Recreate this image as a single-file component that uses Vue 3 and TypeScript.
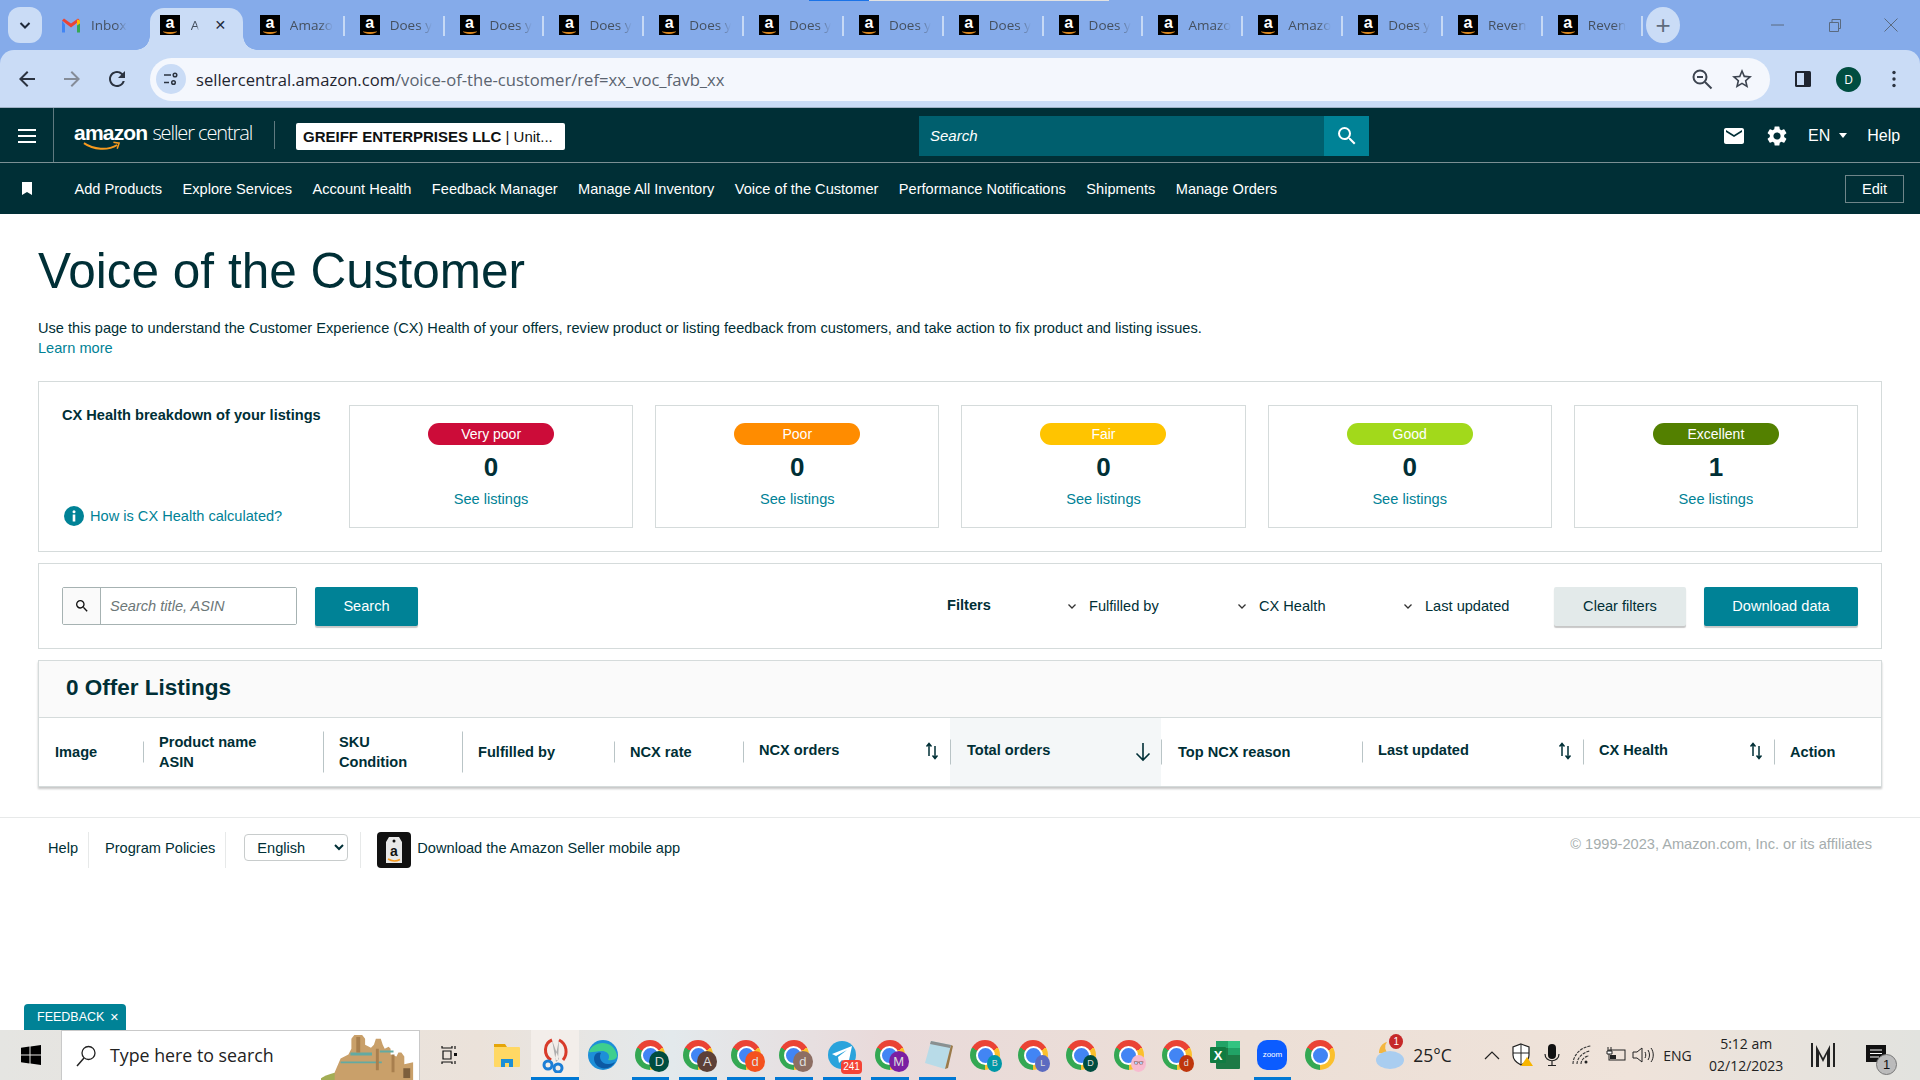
<script setup lang="ts">
interface IBrowserTab {
    title: string;
    gmail?: boolean;
    active?: boolean;
}

interface IColumn {
    lines: string[];
    sep: number;
    sort?: 'both' | 'down';
    selected?: boolean;
}

interface IApp {
    kind: string;
    badge?: string;
    color?: string;
    small?: boolean;
    open?: boolean;
    focus?: boolean;
}

const tabs: IBrowserTab[] = [
    { title: 'Inbox', gmail: true },
    { title: 'A', active: true },
    { title: 'Amazo' },
    { title: 'Does y' },
    { title: 'Does y' },
    { title: 'Does y' },
    { title: 'Does y' },
    { title: 'Does y' },
    { title: 'Does y' },
    { title: 'Does y' },
    { title: 'Does y' },
    { title: 'Amazo' },
    { title: 'Amazo' },
    { title: 'Does y' },
    { title: 'Reven' },
    { title: 'Reven' },
];

const navItems = [
    'Add Products',
    'Explore Services',
    'Account Health',
    'Feedback Manager',
    'Manage All Inventory',
    'Voice of the Customer',
    'Performance Notifications',
    'Shipments',
    'Manage Orders',
];

const healthCards = [
    { label: 'Very poor', color: '#cc0c39', count: 0 },
    { label: 'Poor', color: '#ff8c00', count: 0 },
    { label: 'Fair', color: '#ffc400', count: 0 },
    { label: 'Good', color: '#a2d91b', count: 0 },
    { label: 'Excellent', color: '#538000', count: 1 },
];

const filters = ['Fulfilled by', 'CX Health', 'Last updated'];

const columns: IColumn[] = [
    { lines: ['Image'], sep: 0 },
    { lines: ['Product name', 'ASIN'], sep: 21 },
    { lines: ['SKU', 'Condition'], sep: 41 },
    { lines: ['Fulfilled by'], sep: 41 },
    { lines: ['NCX rate'], sep: 21 },
    { lines: ['NCX orders'], sep: 21, sort: 'both' },
    { lines: ['Total orders'], sep: 25, sort: 'down', selected: true },
    { lines: ['Top NCX reason'], sep: 25 },
    { lines: ['Last updated'], sep: 21, sort: 'both' },
    { lines: ['CX Health'], sep: 25, sort: 'both' },
    { lines: ['Action'], sep: 25 },
];

const apps: IApp[] = [
    { kind: 'explorer' },
    { kind: 'snip', open: true, focus: true },
    { kind: 'edge' },
    { kind: 'chrome', badge: 'D', color: '#004d40', open: true },
    { kind: 'chrome', badge: 'A', color: '#5d4037', open: true },
    { kind: 'chrome', badge: 'd', color: '#f4511e', open: true },
    { kind: 'chrome', badge: 'd', color: '#8d6e63', open: true },
    { kind: 'telegram', open: true },
    { kind: 'chrome', badge: 'M', color: '#7b1fa2', open: true },
    { kind: 'notepad', open: true },
    { kind: 'chrome', badge: 'B', color: '#0097a7', small: true },
    { kind: 'chrome', badge: 'L', color: '#5c6bc0', small: true },
    { kind: 'chrome', badge: 'D', color: '#004d40', small: true },
    { kind: 'chrome', badge: '👓', color: '#f8bbd0', small: true },
    { kind: 'chrome', badge: 'd', color: '#bf360c', small: true },
    { kind: 'excel' },
    { kind: 'zoom', open: true },
    { kind: 'chrome' },
];

const searchPath = 'M15.5 14h-.79l-.28-.27A6.47 6.47 0 0 0 16 9.5 6.5 6.5 0 1 0 9.5 16c1.61 0 3.09-.59 4.23-1.57l.27.28v.79l5 4.99L20.49 19l-4.99-5zm-6 0C7.01 14 5 11.99 5 9.5S7.01 5 9.5 5 14 7.01 14 9.5 11.99 14 9.5 14z';
</script>

<template>
    <div class="page">
        <div class="loading-line"><span></span></div>

        <div class="browser">
            <div class="tabstrip">
                <button class="tab-search">
                    <svg width="14" height="14" viewBox="0 0 14 14"><path d="M2.5 5l4.5 4.5L11.500 5" fill="none" stroke="#1f2a3a" stroke-width="2" /></svg>
                </button>
                <div class="tabs">
                    <div v-for="tab in tabs" class="tab" :class="{ active: tab.active, mail: tab.gmail }">
                        <svg v-if="tab.gmail" class="favicon" viewBox="0 0 20 16">
                            <path d="M1 3v12h3V7z" fill="#4285f4" />
                            <path d="M16 7v8h3V3z" fill="#34a853" />
                            <path d="M1 3l9 7 9-7-2-2-7 5-7-5z" fill="#ea4335" />
                            <path d="M16 2l3 1v3l-3 2z" fill="#fbbc04" />
                        </svg>
                        <span v-else class="favicon amazon-icon">a<i></i></span>
                        <span class="tab-title">{{ tab.title }}</span>
                        <span v-if="tab.active" class="tab-close">✕</span>
                    </div>
                </div>
                <button class="tab-new">+</button>
                <div class="window-controls">
                    <svg width="16" height="16" viewBox="0 0 16 16"><path d="M2 8h13" stroke="#5a6a80" /></svg>
                    <svg width="16" height="16" viewBox="0 0 16 16"><path d="M3.500 5.500h9v9h-9zM6 5.500V2.500h8.500v9h-2" fill="none" stroke="#5a6a80" /></svg>
                    <svg width="16" height="16" viewBox="0 0 16 16"><path d="M1.500 1.500l13 13M14.500 1.500l-13 13" stroke="#5a6a80" /></svg>
                </div>
            </div>

            <div class="toolbar">
                <svg class="tool" viewBox="0 0 24 24"><path d="M20 11H7.830l5.590-5.590L12 4l-8 8 8 8 1.410-1.410L7.830 13H20v-2z" fill="#2b3340" /></svg>
                <svg class="tool" viewBox="0 0 24 24"><path d="M4 11h12.170l-5.590-5.590L12 4l8 8-8 8-1.410-1.410L16.170 13H4v-2z" fill="#858c98" /></svg>
                <svg class="tool" viewBox="0 0 24 24"><path d="M17.650 6.350A7.958 7.958 0 0 0 12 4c-4.420 0-7.990 3.580-7.990 8s3.570 8 7.990 8c3.730 0 6.840-2.550 7.730-6h-2.080A5.990 5.990 0 0 1 12 18c-3.310 0-6-2.690-6-6s2.690-6 6-6c1.660 0 3.140.690 4.220 1.780L13 11h7V4l-2.350 2.350z" fill="#2b3340" /></svg>
                <div class="urlbar">
                    <span class="site-btn">
                        <svg width="16" height="16" viewBox="0 0 16 16"><path d="M1 4h7M1 11.500h5" stroke="#2b3340" stroke-width="1.600" /><circle cx="12" cy="4" r="1.800" fill="none" stroke="#2b3340" stroke-width="1.500" /><circle cx="10.500" cy="11.500" r="1.800" fill="none" stroke="#2b3340" stroke-width="1.500" /></svg>
                    </span>
                    <span class="url"><b>sellercentral.amazon.com</b>/voice-of-the-customer/ref=xx_voc_favb_xx</span>
                    <svg class="url-icon" viewBox="0 0 24 24"><circle cx="10" cy="10" r="6.500" fill="none" stroke="#3c4450" stroke-width="2" /><path d="M7 10h6" stroke="#3c4450" stroke-width="2" /><path d="M15 15l6.500 6.500" stroke="#3c4450" stroke-width="2" /></svg>
                    <svg class="url-icon" viewBox="0 0 24 24"><path d="M22 9.240l-7.190-.620L12 2 9.190 8.630 2 9.240l5.460 4.730L5.820 21 12 17.270 18.180 21l-1.630-7.030L22 9.240zM12 15.400l-3.760 2.270 1-4.280-3.320-2.880 4.380-.380L12 6.100l1.710 4.040 4.380.380-3.320 2.880 1 4.280L12 15.400z" fill="#3c4450" /></svg>
                </div>
                <svg class="panel-icon" viewBox="0 0 18 18"><rect x="1" y="1" width="16" height="16" rx="1.500" fill="#1f2530" /><rect x="3" y="3" width="7" height="12" fill="#cadcf6" /></svg>
                <span class="avatar">D</span>
                <svg class="menu-icon" viewBox="0 0 4 18"><circle cx="2" cy="2.500" r="1.700" /><circle cx="2" cy="9" r="1.700" /><circle cx="2" cy="15.500" r="1.700" /></svg>
            </div>
        </div>

        <header class="sc-header">
            <div class="burger"><span></span><span></span><span></span></div>
            <div class="logo">
                <span class="logo-amazon">amazon<svg class="logo-smile" viewBox="0 0 40 10"><path d="M1 2c10 7 25 8 35 2" fill="none" stroke="#f79a1e" stroke-width="2" /><path d="M32 1l6 1-2 6" fill="none" stroke="#f79a1e" stroke-width="1.600" /></svg></span>
                <span class="logo-seller">seller central</span>
            </div>
            <span class="logo-sep"></span>
            <div class="account"><b>GREIFF ENTERPRISES LLC</b>&nbsp;| Unit...</div>
            <div class="global-search">
                <span class="global-search-text">Search</span>
                <span class="global-search-btn"><svg width="24" height="24" viewBox="0 0 24 24"><path :d="searchPath" fill="#fff" /></svg></span>
            </div>
            <div class="header-right">
                <svg width="24" height="24" viewBox="0 0 24 24"><path d="M20 4H4c-1.100 0-2 .9-2 2v12c0 1.100.9 2 2 2h16c1.100 0 2-.9 2-2V6c0-1.100-.9-2-2-2zm0 4l-8 5-8-5V6l8 5 8-5v2z" fill="#fff" /></svg>
                <svg width="24" height="24" viewBox="0 0 24 24"><path d="M19.140 12.940c.04-.3.06-.61.06-.94 0-.32-.02-.64-.07-.94l2.030-1.580a.49.49 0 0 0 .12-.61l-1.920-3.320a.488.488 0 0 0-.59-.22l-2.390.96c-.5-.38-1.030-.7-1.620-.94l-.36-2.540a.484.484 0 0 0-.48-.41h-3.840c-.24 0-.43.17-.47.41l-.36 2.540c-.59.24-1.130.57-1.620.94l-2.390-.96c-.22-.08-.47 0-.59.22L2.740 8.870c-.12.21-.08.47.12.61l2.030 1.580c-.05.3-.09.63-.09.94s.02.64.07.94l-2.030 1.580a.49.49 0 0 0-.12.61l1.920 3.320c.12.22.37.29.59.22l2.390-.96c.5.38 1.030.7 1.620.94l.36 2.540c.05.24.24.41.48.41h3.840c.24 0 .44-.17.47-.41l.36-2.540c.59-.24 1.130-.56 1.620-.94l2.390.96c.22.08.47 0 .59-.22l1.920-3.320c.12-.22.07-.47-.12-.61l-2.010-1.580zM12 15.600c-1.980 0-3.600-1.620-3.600-3.600s1.620-3.600 3.600-3.600 3.600 1.620 3.600 3.600-1.620 3.600-3.600 3.600z" fill="#fff" /></svg>
                <span class="lang">EN<i class="caret"></i></span>
                <span class="help">Help</span>
            </div>
        </header>

        <nav class="sc-nav">
            <svg class="bookmark" viewBox="0 0 10 13"><path d="M0 0h10v13L5 10 0 13z" fill="#fff" /></svg>
            <a v-for="item in navItems" class="nav-link">{{ item }}</a>
            <button class="edit-btn">Edit</button>
        </nav>

        <main class="content">
            <h1 class="title">Voice of the Customer</h1>
            <p class="intro">Use this page to understand the Customer Experience (CX) Health of your offers, review product or listing feedback from customers, and take action to fix product and listing issues.<br><a>Learn more</a></p>

            <section class="box breakdown">
                <div class="breakdown-left">
                    <h2 class="breakdown-title">CX Health breakdown of your listings</h2>
                    <div class="how">
                        <svg width="20" height="20" viewBox="0 0 20 20"><circle cx="10" cy="10" r="10" fill="#008296" /><rect x="8.700" y="8.500" width="2.600" height="7" fill="#fff" /><circle cx="10" cy="5.800" r="1.500" fill="#fff" /></svg>
                        <a>How is CX Health calculated?</a>
                    </div>
                </div>
                <div class="cards">
                    <div v-for="card in healthCards" class="card">
                        <span class="pill" :style="{ background: card.color }">{{ card.label }}</span>
                        <strong class="count">{{ card.count }}</strong>
                        <a>See listings</a>
                    </div>
                </div>
            </section>

            <section class="box filterbar">
                <div class="search-group">
                    <span class="search-icon"><svg width="16" height="16" viewBox="0 0 24 24"><path :d="searchPath" fill="#111" /></svg></span>
                    <input class="search-input" type="text" placeholder="Search title, ASIN" />
                </div>
                <button class="btn primary search-btn">Search</button>
                <span class="filters-label">Filters</span>
                <span v-for="filter in filters" class="filter">
                    <svg width="10" height="7" viewBox="0 0 10 7"><path d="M1.500 1.500L5 5l3.500-3.500" fill="none" stroke="#333" stroke-width="1.300" /></svg>
                    {{ filter }}
                </span>
                <button class="btn clear">Clear filters</button>
                <button class="btn primary download">Download data</button>
            </section>

            <section class="box listings">
                <h2 class="listings-title">0 Offer Listings</h2>
                <div class="listings-head">
                    <div v-for="col in columns" class="col" :class="{ selected: col.selected }">
                        <span v-if="col.sep" class="col-sep" :style="{ height: col.sep + 'px' }"></span>
                        <div class="col-label" :class="{ sortable: col.sort }">
                            <div v-for="line in col.lines">{{ line }}</div>
                        </div>
                        <svg v-if="col.sort === 'both'" class="sort" viewBox="0 0 14 18"><path d="M4 14V2M1.500 4.500L4 1.500l2.500 3M10 4v12M7.500 13.500l2.500 3 2.500-3" fill="none" stroke="#002f36" stroke-width="1.500" /></svg>
                        <svg v-if="col.sort === 'down'" class="sort" viewBox="0 0 18 20"><path d="M9 1v17M2.500 11.500L9 18l6.500-6.500" fill="none" stroke="#002f36" stroke-width="1.600" /></svg>
                    </div>
                </div>
            </section>
        </main>

        <footer class="sc-footer">
            <a class="foot-link">Help</a>
            <a class="foot-link">Program Policies</a>
            <div class="foot-select"><select><option>English</option></select></div>
            <svg class="app-tag" viewBox="0 0 34 36">
                <rect width="34" height="36" rx="4" fill="#111" />
                <path d="M12 5h10l3 5v21H9V10z" fill="#e8e8e8" />
                <circle cx="17" cy="9" r="1.500" fill="#111" />
                <text x="17" y="24" text-anchor="middle" font-family="Liberation Sans" font-size="14" font-weight="700" fill="#111">a</text>
                <path d="M11 27c4 2.500 8 2.500 12 .5" fill="none" stroke="#f79a1e" stroke-width="1.500" />
            </svg>
            <a class="app-link">Download the Amazon Seller mobile app</a>
            <span class="copyright">© 1999-2023, Amazon.com, Inc. or its affiliates</span>
        </footer>

        <div class="taskbar">
            <div class="start">
                <svg width="20" height="20" viewBox="0 0 20 20"><path d="M0 2.800l8.500-1.200v8H0zM9.500 1.500L20 0v9.600H9.500zM0 10.500h8.500v8L0 17.300zM9.500 10.500H20V20L9.500 18.600z" fill="#000" /></svg>
            </div>
            <div class="task-search">
                <svg width="22" height="22" viewBox="0 0 22 22"><circle cx="13.500" cy="8" r="6.500" fill="none" stroke="#222" stroke-width="1.300" /><path d="M9 13l-7 8" stroke="#222" stroke-width="1.500" /></svg>
                <span>Type here to search</span>
                <svg class="fort" viewBox="0 0 100 50">
                    <ellipse cx="40" cy="52" rx="42" ry="12" fill="#a3ad55" />
                    <path d="M14 42l6-14 8-4 3-6V8l3-4h8l3 4v6l6 3 3-3 2-6h5l2 6 2 4 4-2 2 2v6l6 2 2-4h3l3 4v8l9-2v18H14z" fill="#c9a06a" />
                    <path d="M30 22h22v3H30zM20 31h42v2H20zM60 20h14v2H60z" fill="#62aaa2" />
                    <path d="M36 6h4v16h-4zM56 18h3v22h-3zM72 24h3v18h-3z" fill="#a87f4e" />
                    <path d="M84 38h7v10h-7z" fill="#7d5f3c" />
                </svg>
            </div>
            <div class="task-view">
                <svg width="20" height="20" viewBox="0 0 20 20"><path d="M1 1v2h10V1M1 19v-2h10v2M2 6h8v8H2zM14 1v3M14 16v3" fill="none" stroke="#111" stroke-width="1.200" /><rect x="13" y="8" width="3" height="3" fill="#111" /></svg>
            </div>
            <div class="apps">
                <div v-for="app in apps" class="app" :class="{ open: app.open, focus: app.focus }">
                    <span v-if="app.kind === 'chrome'" class="chrome">
                        <i class="chrome-core"></i>
                        <span v-if="app.badge" class="chrome-badge" :class="{ small: app.small }" :style="{ background: app.color }">{{ app.badge }}</span>
                    </span>
                    <svg v-else-if="app.kind === 'explorer'" width="28" height="26" viewBox="0 0 28 26"><path d="M1 2h11l2 3H1z" fill="#e5a50a" /><rect x="1" y="5" width="26" height="20" rx="1" fill="#ffd864" /><path d="M8 25v-8h12v8h-4v-4h-4v4z" fill="#1c8fd6" /></svg>
                    <svg v-else-if="app.kind === 'snip'" width="28" height="36" viewBox="0 0 28 36"><path d="M11 3c-8 3-9 15-1 20M18 3c8 4 9 14 4 20" fill="none" stroke="#d83b2a" stroke-width="3" /><path d="M11 3l7 19-3 3zM18 3l-4 19 3 2z" fill="#aeaeae" /><circle cx="7" cy="28" r="4" fill="none" stroke="#1c7ed6" stroke-width="3" /><circle cx="17" cy="31" r="4" fill="none" stroke="#1c7ed6" stroke-width="3" /></svg>
                    <svg v-else-if="app.kind === 'edge'" width="32" height="32" viewBox="0 0 32 32"><circle cx="16" cy="16" r="15" fill="#1d8fd8" /><path d="M2 13C5 2 26-1 30 16c.5 4-4 6-9 5 3-5-1-9-6-9-6 0-11 2-13 1z" fill="#3ecf8e" /><path d="M14 14c-3 5 1 12 8 11 2 0 4-1 6-2-3 6-11 8-16 5-5-3-6-9-4-12 1-2 4-3 6-2z" fill="#0c59a4" /></svg>
                    <span v-else-if="app.kind === 'telegram'" class="telegram">
                        <svg width="30" height="30" viewBox="0 0 30 30"><circle cx="15" cy="15" r="14" fill="#2aa3dc" /><path d="M5 14l20-8-4 19-6-5-3 3-1-6 9-7-11 6z" fill="#fff" /></svg>
                        <span class="tg-badge">241</span>
                    </span>
                    <svg v-else-if="app.kind === 'notepad'" width="30" height="32" viewBox="0 0 30 32"><path d="M8 2l20 4-6 24-20-6z" fill="#b8dbe8" /><path d="M8 2l20 4-1 3-20-4z" fill="#8a8f90" /><path d="M28 6l-6 24 3-1 5-22z" fill="#9a7a4a" /></svg>
                    <svg v-else-if="app.kind === 'excel'" width="30" height="30" viewBox="0 0 30 30"><rect x="6" y="1" width="24" height="28" rx="1" fill="#1d7a45" /><rect x="18" y="1" width="12" height="7" fill="#33c481" /><rect x="18" y="8" width="12" height="7" fill="#21a366" /><rect x="6" y="1" width="12" height="7" fill="#21a366" /><rect x="0" y="7" width="16" height="16" rx="1" fill="#107c41" /><text x="8" y="20" text-anchor="middle" font-family="Liberation Sans" font-size="13" font-weight="700" fill="#fff">X</text></svg>
                    <span v-else-if="app.kind === 'zoom'" class="zoom-icon">zoom</span>
                </div>
            </div>
            <div class="tray">
                <div class="weather">
                    <svg width="32" height="32" viewBox="0 0 32 32"><path d="M13 3a8 8 0 0 0 2 12L5 14c0-5 3-10 8-11z" fill="#f4b63f" /><ellipse cx="16" cy="21" rx="14" ry="9" fill="#a9cdf0" /></svg>
                    <span class="weather-badge">1</span>
                    <span class="temp">25°C</span>
                </div>
                <svg class="tray-chevron" width="16" height="10" viewBox="0 0 16 10"><path d="M1 9l7-7 7 7" fill="none" stroke="#222" stroke-width="1.200" /></svg>
                <svg class="tray-icon" width="22" height="24" viewBox="0 0 22 24"><path d="M10 1l8 3v8c0 5-4 8-8 10-4-2-8-5-8-10V4z" fill="#fff" stroke="#222" stroke-width="1.200" /><path d="M10 1v21M2 10h16" stroke="#222" /><path d="M16 14l6 9H10z" fill="#f7b500" /></svg>
                <svg class="tray-icon" width="18" height="24" viewBox="0 0 18 24"><rect x="5" y="1" width="8" height="15" rx="4" fill="#111" /><path d="M2 11c0 9 14 9 14 0M9 18v4M5 22.500h8" fill="none" stroke="#222" stroke-width="1.200" /></svg>
                <svg class="tray-icon wifi" width="22" height="22" viewBox="0 0 22 22"><path d="M2 20C2 11 10 3 20 2M6 20c0-6 6-12 13-13M10 20c0-4 4-8 8-8" fill="none" stroke="#333" stroke-width="1.100" stroke-dasharray="3 1" /><circle cx="15" cy="18" r="1.500" fill="#222" /></svg>
                <svg class="tray-icon battery" width="22" height="18" viewBox="0 0 22 18"><rect x="4" y="4" width="16" height="10" fill="none" stroke="#222" /><rect x="5" y="9" width="6" height="4" fill="#222" /><path d="M3 1v4M6 1v4M2 5h5v3H2z" stroke="#222" fill="#fff" /></svg>
                <svg class="tray-icon" width="22" height="20" viewBox="0 0 22 20"><path d="M1 7h4l5-4v14l-5-4H1z" fill="none" stroke="#222" /><path d="M13 7c1 2 1 4 0 6M16 5c2 3 2 7 0 10M19 3c3 4 3 10 0 14" fill="none" stroke="#222" /></svg>
                <span class="eng">ENG</span>
                <div class="clock"><span>5:12 am</span><span>02/12/2023</span></div>
                <svg class="m-logo" width="26" height="26" viewBox="0 0 26 26"><path d="M1 1h2v24H1zM23 1h2v24h-2zM6 3l7 13 7-13v22h-3V12l-4 8-4-8v13H6z" fill="#222" /></svg>
                <div class="notif">
                    <svg width="22" height="22" viewBox="0 0 22 22"><path d="M1 1h20v17H1z" fill="#111" /><path d="M5 6h12M5 9.500h12M5 13h9" stroke="#fff" /></svg>
                    <span class="notif-badge">1</span>
                </div>
            </div>
        </div>

        <div class="feedback">FEEDBACK <span>✕</span></div>
    </div>
</template>

<style scoped>
.page {
    position: relative;
    height: 1080px;
    display: flex;
    flex-direction: column;
    overflow: hidden;
    background: #fff;
    color: #002f36;
    font-family: "Liberation Sans", Arial, sans-serif;
    font-size: 14.6px;
}

a {
    color: #008296;
}

button {
    font-family: inherit;
    border: 0;
}

/* browser chrome */
.loading-line {
    position: absolute;
    top: 0;
    left: 809px;
    width: 300px;
    height: 1px;
    background: #e2e2e2;
}

.loading-line span {
    display: block;
    width: 60px;
    height: 1px;
    background: #1a73e8;
}

.browser {
    flex: none;
    background: #85abea;
}

.tabstrip {
    height: 50px;
    display: flex;
    align-items: flex-start;
    padding-left: 8px;
}

.tab-search,
.tab-new {
    width: 34px;
    height: 36px;
    margin-top: 7px;
    border-radius: 12px;
    background: #cadcf6;
    display: flex;
    align-items: center;
    justify-content: center;
    padding: 0;
}

.tab-new {
    border-radius: 50%;
    font-size: 26px;
    font-weight: 300;
    color: #5f6b7c;
}

.tabs {
    display: flex;
    height: 50px;
    margin-left: 8px;
    width: 1596px;
}

.tab {
    width: 99.85px;
    flex: none;
    display: flex;
    align-items: center;
    position: relative;
    padding-left: 10px;
    height: 50px;
    box-sizing: border-box;
}

.tab::after {
    content: "";
    position: absolute;
    right: 5px;
    top: 16px;
    width: 2px;
    height: 20px;
    background: #c6d9f5;
}

.tab.mail {
    padding-left: 11px;
}

.tab.mail::after {
    display: none;
}

.tab.active {
    width: 93px;
    margin-right: 7px;
    background: #cadcf6;
    border-radius: 14px 14px 0 0;
    margin-top: 8px;
    height: 42px;
    padding-bottom: 8px;
}

.tab.active::before,
.tab.active::after {
    content: "";
    position: absolute;
    top: auto;
    bottom: 0;
    width: 14px;
    height: 14px;
    background: radial-gradient(circle at 0 0, transparent 13.5px, #cadcf6 14px);
}

.tab.active::before {
    left: -14px;
}

.tab.active::after {
    right: -14px;
    background: radial-gradient(circle at 100% 0, transparent 13.5px, #cadcf6 14px);
}

.favicon {
    width: 20px;
    height: 20px;
    flex: none;
}

.tab.mail .favicon {
    height: 17px;
}

.amazon-icon {
    position: relative;
    background: #000;
    color: #fff;
    font-weight: 700;
    font-size: 16px;
    line-height: 15px;
    text-align: center;
}

.amazon-icon i {
    position: absolute;
    left: 3px;
    right: 3px;
    bottom: 1px;
    height: 4px;
    border-bottom: 2px solid #d9861e;
    border-radius: 0 0 50% 50%;
}

.tab-title {
    margin-left: 10px;
    white-space: nowrap;
    font-family: "Open Sans", sans-serif;
    font-size: 13.5px;
    color: #45505f;
    -webkit-mask-image: linear-gradient(90deg, #000 70%, transparent);
    mask-image: linear-gradient(90deg, #000 70%, transparent);
}

.tab.active .tab-title {
    margin-left: 11px;
}

.tab-close {
    margin-left: 15px;
    font-size: 14px;
    font-weight: 700;
    color: #1f2a3a;
    font-family: "DejaVu Sans", sans-serif;
}

.window-controls {
    position: absolute;
    top: 17px;
    right: 21px;
    display: flex;
    gap: 41px;
}

.toolbar {
    height: 58px;
    box-sizing: border-box;
    display: flex;
    align-items: center;
    background: #cadcf6;
    border-radius: 14px 14px 0 0;
    padding: 1px 0 0 15px;
    border-bottom: 1px solid #9fb0c4;
}

.tool {
    width: 24px;
    height: 24px;
    margin-right: 21px;
    flex: none;
}

.urlbar {
    width: 1620px;
    height: 43px;
    margin-left: 0;
    border-radius: 22px;
    background: #f4f7fd;
    display: flex;
    align-items: center;
    padding: 0 16px 0 6px;
    box-sizing: border-box;
    flex: none;
}

.site-btn {
    width: 30px;
    height: 30px;
    border-radius: 50%;
    background: #cadcf6;
    display: flex;
    align-items: center;
    justify-content: center;
}

.url {
    margin-left: 10px;
    flex: 1;
    font-family: "Open Sans", sans-serif;
    font-size: 16.6px;
    color: #5b6470;
}

.url b {
    font-weight: 400;
    color: #1f2530;
}

.url-icon {
    width: 24px;
    height: 24px;
    margin-left: 16px;
}

.panel-icon {
    width: 18px;
    height: 18px;
    margin-left: 24px;
}

.avatar {
    width: 25px;
    height: 25px;
    margin-left: 24px;
    border-radius: 50%;
    background: #004d40;
    color: #fff;
    font-size: 12px;
    font-family: "Open Sans", sans-serif;
    display: flex;
    align-items: center;
    justify-content: center;
}

.menu-icon {
    width: 4px;
    height: 18px;
    margin-left: 31px;
    fill: #2b3340;
}

/* seller central header */
.sc-header {
    height: 55px;
    flex: none;
    box-sizing: border-box;
    display: flex;
    align-items: center;
    background: #002f36;
    border-bottom: 1px solid #7b9094;
    color: #fff;
}

.burger {
    width: 54px;
    height: 100%;
    box-sizing: border-box;
    border-right: 1px solid #5f7a80;
    padding-top: 2px;
    display: flex;
    flex-direction: column;
    justify-content: center;
    align-items: center;
    gap: 4px;
}

.burger span {
    width: 18px;
    height: 2px;
    background: #fff;
}

.logo {
    margin: 0 0 0 20px;
    display: flex;
    align-items: baseline;
    width: 180px;
    gap: 5px;
    height: 34px;
    line-height: 30px;
    white-space: nowrap;
}

.logo-amazon {
    position: relative;
    font-weight: 700;
    font-size: 21px;
    letter-spacing: -0.8px;
}

.logo-smile {
    position: absolute;
    left: 9px;
    top: 23px;
    width: 38px;
    height: 10px;
}

.logo-seller {
    font-family: "Open Sans", sans-serif;
    font-weight: 300;
    font-size: 20px;
    letter-spacing: -1.1px;
}

.logo-sep {
    width: 1px;
    height: 28px;
    background: #5f7a80;
    margin-left: 20px;
}

.account {
    margin: 2px 0 0 21px;
    width: 269px;
    height: 27px;
    box-sizing: border-box;
    border-radius: 2px;
    background: #fff;
    color: #0f1111;
    padding-left: 7px;
    display: flex;
    align-items: center;
    font-size: 15px;
    white-space: nowrap;
}

.global-search {
    margin: 1px 0 0 354px;
    width: 450px;
    height: 40px;
    background: #005f6e;
    display: flex;
    align-items: center;
    justify-content: space-between;
    padding-left: 11px;
    box-sizing: border-box;
}

.global-search-text {
    font-style: italic;
    font-size: 15px;
}

.global-search-btn {
    width: 45px;
    height: 40px;
    background: #008296;
    display: flex;
    align-items: center;
    justify-content: center;
}

.header-right {
    display: flex;
    align-items: center;
    margin: 1px 0 0 353px;
    font-size: 16px;
    gap: 19px;
}

.lang {
    display: flex;
    align-items: center;
    gap: 9px;
    margin-left: 0;
}

.caret {
    border: 4.500px solid transparent;
    border-top: 5px solid #fff;
    border-bottom: 0;
}

.help {
    margin-left: 1px;
}

.sc-nav {
    height: 51px;
    flex: none;
    box-sizing: border-box;
    display: flex;
    align-items: center;
    background: #002f36;
    color: #fff;
    padding-left: 22px;
    padding-right: 16px;
    gap: 20.45px;
}

.bookmark {
    width: 10px;
    height: 13px;
    margin-right: 22px;
}

.nav-link {
    color: #fff;
    white-space: nowrap;
}

.edit-btn {
    margin-left: auto;
    width: 59px;
    height: 28px;
    background: transparent;
    color: #fff;
    border: 1px solid #6f8589;
    font-size: 14.6px;
}

/* page content */
.content {
    padding: 0 38px 0 38px;
    flex: none;
}

.title {
    margin: 27px 0 0;
    font-size: 49.5px;
    line-height: 60px;
    font-weight: 400;
}

.intro {
    margin: 17px 0 0;
    line-height: 20px;
}

.box {
    border: 1px solid #d5dbdb;
    box-sizing: border-box;
    background: #fff;
}

.breakdown {
    margin-top: 23px;
    height: 171px;
    display: flex;
    padding: 23px 23px 23px 23px;
}

.breakdown-left {
    width: 287px;
    flex: none;
    display: flex;
    flex-direction: column;
    justify-content: space-between;
}

.breakdown-title {
    margin: 1px 0 0;
    font-size: 14.6px;
    line-height: 18px;
    font-weight: 700;
}

.how {
    display: flex;
    align-items: center;
    gap: 6px;
    margin: 0 0 2px 2px;
}

.cards {
    flex: 1;
    display: grid;
    grid-template-columns: repeat(5, 1fr);
    gap: 22px;
}

.card {
    border: 1px solid #d5dbdb;
    display: flex;
    flex-direction: column;
    align-items: center;
    padding-top: 17px;
}

.pill {
    width: 126px;
    height: 22px;
    border-radius: 11px;
    color: #fff;
    font-size: 14px;
    line-height: 22px;
    text-align: center;
}

.count {
    font-size: 26px;
    line-height: 30px;
    margin: 7px 0 9px;
}

.filterbar {
    margin-top: 11px;
    height: 86px;
    display: flex;
    align-items: flex-start;
    padding: 23px 23px 0 23px;
}

.search-group {
    width: 235px;
    height: 38px;
    box-sizing: border-box;
    display: flex;
    border: 1px solid #a6b2b2;
    border-radius: 2px;
}

.search-icon {
    width: 37px;
    flex: none;
    background: #fafafa;
    border-right: 1px solid #a6b2b2;
    display: flex;
    align-items: center;
    justify-content: center;
}

.search-input {
    flex: 1;
    min-width: 0;
    border: 0;
    outline: 0;
    padding: 0 9px;
    font-family: inherit;
    font-size: 14.6px;
    font-style: italic;
}

.search-input::placeholder {
    color: #6c7778;
    opacity: 1;
}

.btn {
    height: 39px;
    padding-bottom: 3px;
    border-radius: 2px;
    font-size: 14.6px;
    box-shadow: 0 2px 1px rgba(0, 0, 0, 0.22);
}

.primary {
    background: #008296;
    color: #fff;
}

.search-btn {
    width: 103px;
    margin-left: 18px;
}

.filters-label {
    margin-left: 529px;
    font-weight: 700;
    line-height: 36px;
    width: 120px;
}

.filter {
    display: flex;
    align-items: center;
    gap: 12px;
    height: 38px;
    white-space: nowrap;
}

.filter:nth-of-type(2) {
    width: 170px;
}

.filter:nth-of-type(3) {
    width: 166px;
}

.filter:nth-of-type(4) {
    width: 151px;
}

.clear {
    background: #e3eaea;
    color: #002f36;
    width: 132px;
}

.download {
    width: 154px;
    margin-left: 18px;
}

.listings {
    margin-top: 11px;
    height: 127px;
    box-shadow: 0 2px 2px rgba(0, 0, 0, 0.22);
}

.listings-title {
    margin: 0;
    height: 57px;
    box-sizing: border-box;
    padding-left: 27px;
    background: #fafafa;
    border-bottom: 1px solid #d5dbdb;
    font-size: 22.5px;
    line-height: 54px;
    font-weight: 700;
}

.listings-head {
    height: 68px;
    display: grid;
    grid-template-columns: 104px 180px 139px 152px 129px 207px 211px 201px 221px 191px 1fr;
    font-weight: 700;
    line-height: 20px;
}

.col {
    position: relative;
    display: flex;
    align-items: center;
    padding-left: 16px;
}

.col.selected {
    background: #f4f7f8;
}

.col.selected,
.col.selected + .col {
    padding-left: 17px;
}

.col-sep {
    position: absolute;
    left: 0;
    top: 50%;
    width: 1px;
    transform: translateY(-50%);
    background: #b9c4c6;
}

.col-label.sortable {
    margin-top: -5px;
}

.sort {
    position: absolute;
    right: 11px;
    top: 24px;
    width: 14px;
    height: 18px;
}

.col.selected .sort {
    width: 18px;
    height: 20px;
    right: 9px;
}

/* footer */
.sc-footer {
    margin-top: 30px;
    border-top: 1px solid #e7e9e9;
    padding: 14px 48px 0;
    display: flex;
    align-items: flex-start;
    flex: 1;
    color: #002f36;
}

.foot-link {
    color: #002f36;
    height: 36px;
    line-height: 32px;
    padding-right: 10px;
    margin-right: 16px;
    border-right: 1px solid #e7e9e9;
}

.foot-select {
    padding-right: 12px;
    margin-right: 16px;
    height: 36px;
    border-right: 1px solid #e7e9e9;
    margin-left: 2px;
}

.foot-select select {
    width: 104px;
    height: 27px;
    margin-top: 2px;
    padding-left: 8px;
    border: 1px solid #c8cccc;
    border-radius: 4px;
    background: #fff;
    font-family: inherit;
    font-size: 14.6px;
    color: #002f36;
}

.app-tag {
    width: 34px;
    height: 36px;
    flex: none;
}

.app-link {
    color: #002f36;
    margin-left: 6px;
    line-height: 32px;
}

.copyright {
    margin-left: auto;
    margin-top: 1px;
    color: #a5adad;
    line-height: 22px;
}

/* windows taskbar */
.taskbar {
    height: 50px;
    flex: none;
    display: flex;
    align-items: stretch;
    background: linear-gradient(90deg, #e5e5e2 0%, #ebe2da 25%, #e3e9ec 35%, #e9dada 46%, #ecdfd6 65%, #efe3da 85%, #e2e3df 100%);
}

.start {
    width: 61px;
    display: flex;
    align-items: center;
    justify-content: center;
}

.task-search {
    width: 359px;
    box-sizing: border-box;
    background: #fff;
    border: 1px solid #c9c9c9;
    border-bottom: 0;
    display: flex;
    align-items: center;
    padding-left: 13px;
    position: relative;
    overflow: hidden;
}

.task-search span {
    margin-left: 13px;
    padding-bottom: 2px;
    font-family: "Open Sans", sans-serif;
    font-size: 17.8px;
    color: #222;
}

.fort {
    position: absolute;
    right: 0;
    bottom: 0;
    width: 98px;
    height: 49px;
}

.task-view {
    width: 63px;
    padding-right: 2px;
    box-sizing: border-box;
    display: flex;
    align-items: center;
    justify-content: center;
}

.apps {
    display: flex;
}

.app {
    width: 47.85px;
    position: relative;
    display: flex;
    align-items: center;
    justify-content: center;
}

.app.open::after {
    content: "";
    position: absolute;
    left: 5px;
    right: 5px;
    bottom: 0;
    height: 3px;
    background: #0078d4;
}

.app.focus {
    background: #f3eeea;
}

.app.focus::after {
    left: 0;
    right: 0;
}

.chrome {
    position: relative;
    width: 30px;
    height: 30px;
    border-radius: 50%;
    background: conic-gradient(#ea4335 0 60deg, #fbc02d 60deg 180deg, #34a853 180deg 300deg, #ea4335 300deg);
    display: flex;
    align-items: center;
    justify-content: center;
}

.chrome-core {
    width: 15px;
    height: 15px;
    border-radius: 50%;
    background: #4285f4;
    border: 2.500px solid #fff;
}

.chrome-badge {
    position: absolute;
    right: -4px;
    bottom: -2px;
    width: 20px;
    height: 21px;
    border-radius: 50%;
    color: #ddd;
    font-size: 13px;
    line-height: 21px;
    text-align: center;
}

.chrome-badge.small {
    width: 15px;
    height: 17px;
    right: -2px;
    font-size: 9px;
    line-height: 17px;
}

.telegram {
    position: relative;
    display: flex;
}

.tg-badge {
    position: absolute;
    right: -5px;
    bottom: -4px;
    padding: 0 2px;
    background: #f44336;
    color: #fff;
    border-radius: 4px;
    font-size: 10px;
    line-height: 14px;
}

.zoom-icon {
    width: 30px;
    height: 30px;
    border-radius: 10px;
    background: #0b5cff;
    color: #fff;
    font-size: 8px;
    line-height: 30px;
    text-align: center;
}

.tray {
    display: flex;
    align-items: center;
    flex: 1;
    padding-left: 30px;
}

.weather {
    position: relative;
    display: flex;
    align-items: center;
    width: 110px;
}

.weather-badge {
    position: absolute;
    left: 15px;
    top: -5px;
    width: 14px;
    height: 15px;
    border-radius: 50%;
    background: #c62828;
    color: #fff;
    font-size: 10px;
    line-height: 15px;
    text-align: center;
}

.temp {
    margin-left: 7px;
    font-family: "Open Sans", sans-serif;
    font-size: 17.5px;
    color: #222;
}

.tray-chevron {
    margin-right: 11px;
}

.tray-icon {
    margin-right: 10px;
    flex: none;
}

.tray-icon.wifi {
    margin-right: 12px;
}

.tray-icon.battery {
    margin-right: 5px;
}

.eng {
    margin-left: -1px;
    width: 40px;
    font-family: "Open Sans", sans-serif;
    font-size: 14px;
    color: #222;
}

.clock {
    width: 86px;
    display: flex;
    flex-direction: column;
    align-items: center;
    font-family: "Open Sans", sans-serif;
    font-size: 14px;
    line-height: 22px;
    color: #222;
}

.m-logo {
    margin-left: 21px;
}

.notif {
    position: relative;
    margin-left: 29px;
    display: flex;
}

.notif-badge {
    position: absolute;
    right: -10px;
    bottom: -9px;
    width: 19px;
    height: 19px;
    border-radius: 50%;
    background: #bbb;
    border: 1px solid #777;
    font-size: 13px;
    line-height: 19px;
    text-align: center;
    color: #111;
}

.feedback {
    position: absolute;
    left: 24px;
    bottom: 50px;
    width: 102px;
    height: 26px;
    box-sizing: border-box;
    padding-left: 13px;
    border-radius: 4px 4px 0 0;
    background: #008296;
    color: #fff;
    font-size: 12.5px;
    line-height: 26px;
    white-space: nowrap;
}

.feedback span {
    margin-left: 2px;
    font-family: "DejaVu Sans", sans-serif;
    font-size: 11px;
}
</style>

<style>
html,
body {
    margin: 0;
    overflow: hidden;
}
</style>
